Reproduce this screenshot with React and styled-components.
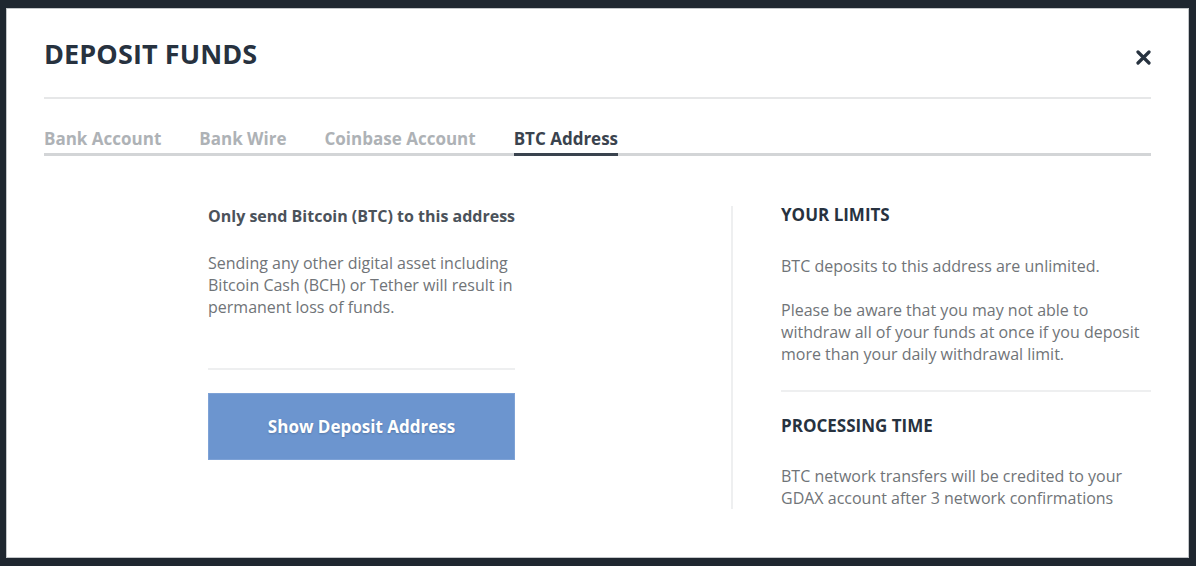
import React from "react";
import styled, { createGlobalStyle } from "styled-components";

const GlobalStyle = createGlobalStyle`
  html, body {
    margin: 0;
    padding: 0;
    background: #1f2730;
    font-family: "Open Sans", "Liberation Sans", sans-serif;
  }
`;

const tabs = ["Bank Account", "Bank Wire", "Coinbase Account", "BTC Address"];

export default function App() {
  return (
    <>
      <GlobalStyle />
      <Backdrop>
        <Modal>
          <Header>
            <Title>DEPOSIT FUNDS</Title>
            <CloseButton aria-label="Close">
              <svg width="15" height="15" viewBox="0 0 15 15">
                <path
                  d="M2 2 L13 13 M13 2 L2 13"
                  stroke="#27323f"
                  strokeWidth="3.2"
                  strokeLinecap="round"
                />
              </svg>
            </CloseButton>
          </Header>
          <TabBar>
            {tabs.map((t) => (
              <Tab key={t} active={t === "BTC Address"}>
                {t}
              </Tab>
            ))}
          </TabBar>
          <Body>
            <LeftCol>
              <Notice>Only send Bitcoin (BTC) to this address</Notice>
              <Text>
                Sending any other digital asset including Bitcoin Cash (BCH) or
                Tether will result in permanent loss of funds.
              </Text>
              <Rule before={50} after={23} />
              <ShowButton>Show Deposit Address</ShowButton>
            </LeftCol>
            <RightCol>
              <SectionTitle>YOUR LIMITS</SectionTitle>
              <Text>BTC deposits to this address are unlimited.</Text>
              <Text>
                Please be aware that you may not able to withdraw all of your
                funds at once if you deposit more than your daily withdrawal
                limit.
              </Text>
              <Rule before={25} after={25} />
              <SectionTitle tight>PROCESSING TIME</SectionTitle>
              <Text>
                BTC network transfers will be credited to your GDAX account
                after 3 network confirmations
              </Text>
            </RightCol>
          </Body>
        </Modal>
      </Backdrop>
    </>
  );
}

const Backdrop = styled.div`
  height: 566px;
  box-sizing: border-box;
  padding: 8px 7px 8px 6px;
`;

const Modal = styled.div`
  height: 100%;
  box-sizing: border-box;
  background: #fff;
  border: 1px solid #c3c6c9;
  padding: 0 37px;
`;

const Header = styled.div`
  display: flex;
  align-items: center;
  justify-content: space-between;
  height: 88px;
  border-bottom: 2px solid #e6e7e8;
`;

const Title = styled.h1`
  margin: 0;
  font-size: 27px;
  font-weight: 700;
  color: #27323f;
  letter-spacing: 0.1px;
`;

const CloseButton = styled.button`
  border: 0;
  background: none;
  padding: 0;
  margin-top: 8px;
  display: flex;
  cursor: pointer;
`;

const TabBar = styled.div`
  display: flex;
  gap: 38px;
  margin-top: 29px;
  border-bottom: 3px solid #d3d5d7;
`;

const Tab = styled.div`
  font-size: 17px;
  font-weight: 700;
  line-height: 22px;
  padding-bottom: 3px;
  margin-bottom: -3px;
  color: ${(p) => (p.active ? "#3a434e" : "#aeb2b6")};
  border-bottom: 3px solid ${(p) => (p.active ? "#3a434e" : "transparent")};
`;

const Body = styled.div`
  display: flex;
  margin-top: 50px;
`;

const LeftCol = styled.div`
  width: 307px;
  padding-left: 164px;
  padding-right: 216px;
  border-right: 2px solid #eeeff0;
`;

const RightCol = styled.div`
  flex: 1;
  padding-left: 48px;
`;

const Notice = styled.div`
  font-size: 16px;
  font-weight: 700;
  color: #4b525a;
  line-height: 22px;
  margin-top: -1px;
  margin-bottom: 25px;
  white-space: nowrap;
`;

const SectionTitle = styled.div`
  font-size: 17px;
  font-weight: 700;
  color: #27323f;
  line-height: 22px;
  margin-top: -2px;
  margin-bottom: ${(p) => (p.tight ? 28 : 29)}px;
`;

const Text = styled.p`
  margin: 0 0 22px;
  font-size: 16px;
  line-height: 22px;
  color: #707478;

  &:last-child {
    margin-bottom: 0;
  }
`;

const Rule = styled.div`
  height: 2px;
  background: #eeeff0;
  margin: ${(p) => p.before}px 0 ${(p) => p.after}px;
`;

const ShowButton = styled.button`
  display: block;
  width: 100%;
  height: 67px;
  border: 1px solid #7ea2d6;
  background: #6c95cf;
  color: #fff;
  font-family: inherit;
  font-size: 17px;
  font-weight: 700;
  text-shadow: 0 1px 2px rgba(0, 0, 0, 0.2);
  cursor: pointer;
`;
